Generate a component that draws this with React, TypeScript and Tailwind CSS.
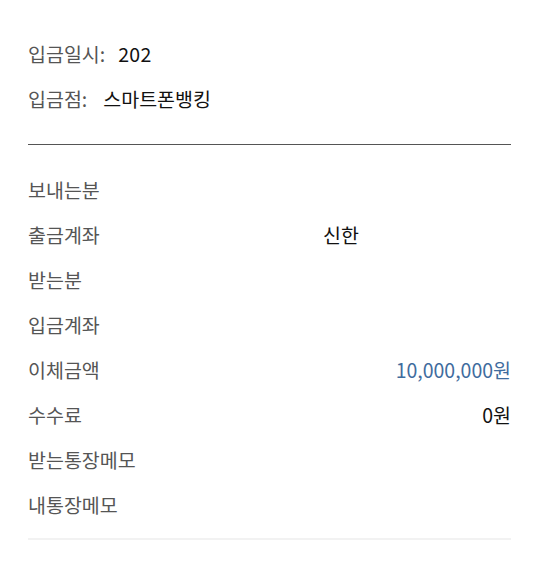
import React from "react";

const rows: { label: string; value?: string; align?: "mid" | "right"; color?: string }[] = [
  { label: "보내는분" },
  { label: "출금계좌", value: "신한", align: "mid" },
  { label: "받는분" },
  { label: "입금계좌" },
  { label: "이체금액", value: "10,000,000원", align: "right", color: "text-[#3f6c9e]" },
  { label: "수수료", value: "0원", align: "right" },
  { label: "받는통장메모" },
  { label: "내통장메모" },
];

export default function App() {
  return (
    <div
      className="w-[538px] h-[565px] bg-white pl-[28px] pr-[27px] pt-[31px] text-[19.5px] leading-none"
      style={{ fontFamily: '"Noto Sans CJK KR", "Noto Sans", sans-serif' }}
    >
      <div className="flex h-[45px] items-center">
        <span className="text-[#555]">입금일시:</span>
        <span className="ml-[13px] text-[#111] tracking-[0.3px]">202</span>
      </div>
      <div className="flex h-[45px] items-center">
        <span className="text-[#555]">입금점:</span>
        <span className="ml-[16px] text-[#111]">스마트폰뱅킹</span>
      </div>
      <div className="mt-[23px] h-px bg-[#555]" />
      <div className="mt-[22px] flex flex-col">
        {rows.map((r) => (
          <div key={r.label} className="flex h-[45px] items-center">
            <span className="w-[295px] text-[#555]">{r.label}</span>
            {r.align === "mid" && <span className="text-[#111]">{r.value}</span>}
            {r.align === "right" && (
              <span className={`ml-auto ${r.color ?? "text-[#111]"}`}>{r.value}</span>
            )}
          </div>
        ))}
      </div>
      <div className="mt-[11px] h-[2px] bg-[#f2f2f2]" />
    </div>
  );
}
